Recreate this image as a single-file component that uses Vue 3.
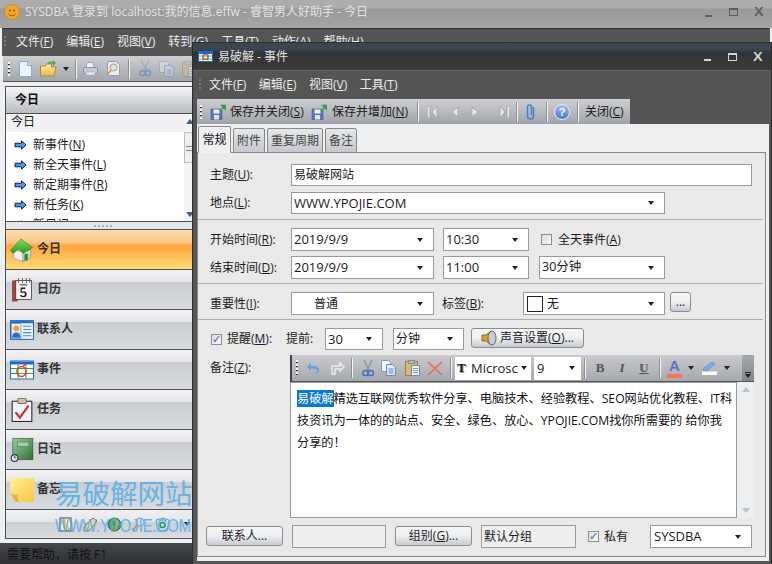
<script setup>
import { h } from 'vue'

const Mn = (props) => {
  const m = props.t.match(/^(.*\()(.)(\).*)$/)
  return m ? [m[1], h('u', m[2]), m[3]] : props.t
}
Mn.props = ['t']

const mainMenu = ['文件(F)', '编辑(E)', '视图(V)', '转到(G)', '工具(T)', '动作(A)', '帮助(H)']
const eventMenu = ['文件(F)', '编辑(E)', '视图(V)', '工具(T)']
const quick = ['新事件(N)', '新全天事件(L)', '新定期事件(R)', '新任务(K)', '新日记']
const nav = [
  { label: '今日', icon: 'i-home', active: true },
  { label: '日历', icon: 'i-cal' },
  { label: '联系人', icon: 'i-contact' },
  { label: '事件', icon: 'i-event' },
  { label: '任务', icon: 'i-task' },
  { label: '日记', icon: 'i-journal' },
  { label: '备忘', icon: 'i-note' }
]
const tabs = ['常规', '附件', '重复周期', '备注']
</script>

<template>
  <div class="desktop">
    <svg class="defs" width="0" height="0" aria-hidden="true">
      <defs>
        <linearGradient id="gGreen" x1="0" y1="0" x2="0" y2="1"><stop offset="0" stop-color="#8fe05a"/><stop offset="1" stop-color="#1f9a2a"/></linearGradient>
        <linearGradient id="gNote" x1="0" y1="0" x2="1" y2="1"><stop offset="0" stop-color="#fff09a"/><stop offset="1" stop-color="#f8c63e"/></linearGradient>
        <linearGradient id="gBook" x1="0" y1="0" x2="1" y2="1"><stop offset="0" stop-color="#9dcf9a"/><stop offset="1" stop-color="#2f6e3c"/></linearGradient>
        <linearGradient id="gHelp" x1="0" y1="0" x2="0" y2="1"><stop offset="0" stop-color="#a8c4f0"/><stop offset="1" stop-color="#3f74cc"/></linearGradient>
        <linearGradient id="gFolder" x1="0" y1="0" x2="0" y2="1"><stop offset="0" stop-color="#fff0a8"/><stop offset="1" stop-color="#e8b84c"/></linearGradient>
      </defs>
      <symbol id="i-arrow" viewBox="0 0 13 10"><path d="M1 3.2h6.5V.8L12 5 7.500 9.200V6.800H1z" fill="#3f9cf5" stroke="#12243f"/></symbol>
      <symbol id="i-home" viewBox="0 0 24 25">
        <path d="M3 12v9l10 3.500V15z" fill="#f4f2ea" stroke="#777" stroke-width=".5"/>
        <path d="M13 15v9.500l8-4V12z" fill="#d8d6cc" stroke="#777" stroke-width=".5"/>
        <path d="M0 13 11 1l12 9-10 6-4-5-6 5z" fill="url(#gGreen)" stroke="#1c7a26" stroke-width=".6"/>
        <rect x="14.500" y="16.500" width="3.500" height="7" fill="#1e8f35"/>
      </symbol>
      <symbol id="i-cal" viewBox="0 0 21 25">
        <rect x="0.500" y="3" width="5" height="21" fill="#c03a30" stroke="#444" stroke-width=".6"/>
        <rect x="4" y="2.500" width="16.500" height="20" fill="#f4f4f4" stroke="#333" stroke-width=".8"/>
        <path d="M7 0v5M11 0v5M15 0v5M18.500 0v5" stroke="#555"/>
        <rect x="8" y="6" width="8" height="2" fill="#888"/>
        <path d="M9 10h5v1.500H10.300v2.500H13c2 0 2.300 1 2.300 3s-1 3-3.300 3-3.200-.8-3.300-2.300h1.500c.2.700.8 1 1.700 1 1 0 1.600-.5 1.600-1.700s-.5-1.600-1.600-1.600H9z" fill="#222"/>
      </symbol>
      <symbol id="i-contact" viewBox="0 0 23 19">
        <rect x="0.500" y="0.500" width="22" height="18" fill="#eef4ff" stroke="#1a6cc8"/>
        <rect x="1" y="1" width="21" height="2" fill="#1a6cc8"/>
        <rect x="1.500" y="3.500" width="9" height="14" fill="#f8f0d0" stroke="#1a6cc8" stroke-width=".5"/>
        <circle cx="6" cy="8" r="2.800" fill="#e8a050"/>
        <path d="M2 17c0-4 2-5 4-5s4 1 4 5z" fill="#2a70c8"/>
        <path d="M12.500 6h8M12.500 9h8M12.500 12h8M12.500 15h8" stroke="#4a90d8"/>
      </symbol>
      <symbol id="i-event" viewBox="0 0 24 19">
        <rect x="0.500" y="0.500" width="23" height="18" fill="#fff" stroke="#1a6cc8"/>
        <rect x="1" y="1" width="22" height="3" fill="#1a6cc8"/>
        <path d="M1 8h22M1 13h22M8 4v14M16 4v14" stroke="#3a9a4a"/>
        <ellipse cx="11.500" cy="11" rx="4.500" ry="5" fill="none" stroke="#e83a20" stroke-width="1.600"/>
        <path d="M13 6l3-3" stroke="#e83a20" stroke-width="1.400"/>
      </symbol>
      <symbol id="i-task" viewBox="0 0 20 22">
        <rect x="1" y="3" width="18" height="18.500" fill="#f3f6ff" stroke="#2a2a3a"/>
        <rect x="6" y="0.500" width="8" height="4.500" rx="1.500" fill="#d8c090" stroke="#776"/>
        <path d="M4 13l4 5 8-11" fill="none" stroke="#d82a2a" stroke-width="2"/>
      </symbol>
      <symbol id="i-journal" viewBox="0 0 20 21">
        <rect x="2" y="0.500" width="17.500" height="18.500" fill="url(#gBook)" stroke="#2f5a3a" stroke-width=".6"/>
        <rect x="6" y="3.500" width="10" height="4" fill="#a8cfa8" stroke="#4f7a58" stroke-width=".6"/>
        <circle cx="3.500" cy="17.500" r="3" fill="#e0e4ee" stroke="#334"/>
        <path d="M3.500 15.500v2h1.500" stroke="#334" fill="none" stroke-width=".7"/>
      </symbol>
      <symbol id="i-note" viewBox="0 0 21 21">
        <path d="M0 0h21v21H6L0 14z" fill="url(#gNote)"/>
        <path d="M0 13c3 2 5 2 7 1-1 2 0 5 1 7H5z" fill="#d8a030" opacity=".7"/>
      </symbol>
      <symbol id="i-save" viewBox="0 0 16 16">
        <path d="M1 5h10l1 1v9.500H1z" fill="#5c76b8" stroke="#44598f" stroke-width=".6"/>
        <rect x="3.500" y="5.500" width="6" height="4" fill="#eef0f8"/>
        <rect x="4" y="11" width="5" height="4.500" fill="#dfe3ee"/>
        <path d="M10 7l4-4M11.500 1.500h4v4z" stroke="#3f9a4a" fill="#3f9a4a" stroke-width="1.300"/>
      </symbol>
      <symbol id="i-scissor" viewBox="0 0 14 17">
        <path d="M3 0l5 10M11 0L6 10" stroke="#8a9099" stroke-width="1.400"/>
        <circle cx="4.500" cy="13" r="2.600" fill="none" stroke="#3f6fc0" stroke-width="1.500"/>
        <circle cx="9.800" cy="13" r="2.600" fill="none" stroke="#3f6fc0" stroke-width="1.500"/>
      </symbol>
      <symbol id="i-copy" viewBox="0 0 15 16">
        <path d="M.5.500h7l2 2v9h-9z" fill="#f4f8ff" stroke="#7a9ac8"/>
        <path d="M5.500 4.500h6l3 3v8h-9z" fill="#dfeafb" stroke="#6a8abc"/>
        <path d="M7.500 9h5M7.500 11h5M7.500 13h5" stroke="#6a8abc"/>
      </symbol>
      <symbol id="i-paste" viewBox="0 0 15 16">
        <rect x=".5" y="1.500" width="12" height="14" fill="#dcb870" stroke="#a08040"/>
        <rect x="3.500" y=".5" width="6" height="3" fill="#bbb" stroke="#888"/>
        <path d="M6.500 5.500h8v10h-8z" fill="#eef4ff" stroke="#6a8abc"/>
        <path d="M8 8.500h5M8 10.500h5M8 12.500h5" stroke="#7a9ac8"/>
      </symbol>
      <symbol id="i-first" viewBox="0 0 12 14"><path d="M1 1h2v12H1M10 1l-5 6 5 6z" fill="#e8e9ea" stroke="#a5a8ad"/></symbol>
      <symbol id="i-last" viewBox="0 0 12 14"><path d="M11 1H9v12h2M2 1l5 6-5 6z" fill="#e8e9ea" stroke="#a5a8ad"/></symbol>
    </svg>

    <!-- main window -->
    <section class="main">
      <header class="m-title">
        <svg class="sun" viewBox="0 0 16 16">
          <circle cx="8" cy="8" r="7.500" fill="#f5a623" stroke="#c77d10" stroke-width=".6"/>
          <circle cx="6" cy="6.500" r="1" fill="#8a5a10"/><circle cx="10" cy="6.500" r="1" fill="#8a5a10"/>
          <path d="M4.500 9.500c1 3 6 3 7 0" fill="none" stroke="#8a5a10"/>
        </svg>
        <span class="m-title-text">SYSDBA 登录到 localhost:我的信息.effw - 睿智男人好助手 - 今日</span>
        <span class="ctrls ctrls-m">
          <i class="c-min"></i><i class="c-max"></i><i class="c-x">X</i>
        </span>
      </header>
      <nav class="m-menu">
        <span class="grip grip-v"></span>
        <span v-for="m in mainMenu" :key="m" class="m-item"><Mn :t="m" /></span>
      </nav>
      <div class="m-tool">
        <span class="grip grip-w"></span>
        <svg class="ic-new" viewBox="0 0 13 16"><path d="M.5.500h8l4 4v11H.5z" fill="#eef4ff" stroke="#8aa8d0"/><path d="M8.500.500v4h4" fill="#cfe0f8" stroke="#8aa8d0"/></svg>
        <svg class="ic-open" viewBox="0 0 17 17"><path d="M.5 6h5l1-2h5v3H16l-2 9H.5z" fill="url(#gFolder)" stroke="#a88a40"/><path d="M7 4c1-3 4-3 6-2V0l3 3-3 3V4c-2-1-4 0-6 0z" fill="#49a84a"/></svg>
        <i class="caret caret-open"></i>
        <i class="sep sep-m1"></i>
        <svg class="ic-print" viewBox="0 0 15 14"><path d="M4 .5h6l1 5H3z" fill="#eef3fa" stroke="#9aa8b8"/><rect x=".5" y="5.500" width="14" height="6" rx="1" fill="#c4cad2" stroke="#8a929a"/><rect x="3" y="10" width="9" height="3" fill="#eee" stroke="#999" stroke-width=".5"/></svg>
        <svg class="ic-prev" viewBox="0 0 13 15"><path d="M.5.500h8l4 3v11H.5z" fill="#e6eef8" stroke="#8aa0c0"/><circle cx="6.500" cy="6.500" r="3.500" fill="#cfe6ff" stroke="#e09030"/><path d="M4 9l-3 4" stroke="#e09030" stroke-width="1.600"/></svg>
        <i class="sep sep-m2"></i>
        <svg class="ic-mcut" viewBox="0 0 14 17"><use href="#i-scissor" opacity=".45"/></svg>
        <svg class="ic-mcopy" viewBox="0 0 15 16"><use href="#i-copy" opacity=".4"/></svg>
        <svg class="ic-mpaste" viewBox="0 0 15 16"><use href="#i-paste" opacity=".4"/></svg>
      </div>

      <div class="m-body">
        <aside class="sidebar">
          <div class="side-head">今日</div>
          <div class="side-top">
            <div class="side-list">
              <div class="side-sub">今日</div>
              <div v-for="q in quick" :key="q" class="q-row">
                <svg class="q-arrow"><use href="#i-arrow"/></svg>
                <span><Mn :t="q" /></span>
              </div>
            </div>
            <div class="side-scroll">
              <i class="s-up"></i>
              <i class="s-thumb"></i>
              <i class="s-down"></i>
            </div>
          </div>
          <div class="splitter"><i></i><i></i><i></i><i></i><i></i></div>
          <div v-for="n in nav" :key="n.label" class="nav-row" :class="{ active: n.active }">
            <span class="nav-ic"><svg class="nav-svg" :class="n.icon"><use :href="'#' + n.icon"/></svg></span>
            <span class="nav-label">{{ n.label }}</span>
          </div>
          <div class="nav-foot">
            <svg class="f-ic f1" viewBox="0 0 15 15"><rect x="1" y="1" width="11" height="13" fill="#eef4ff" stroke="#445"/><path d="M5 1v10l3 3 3-3" fill="#f8d870" stroke="#a88a40"/></svg>
            <svg class="f-ic f2" viewBox="0 0 15 15"><path d="M10 1l4 3-8 10-5 0 0-4z" fill="#f0d890" stroke="#8a7040"/></svg>
            <svg class="f-ic f3" viewBox="0 0 15 15"><circle cx="7.500" cy="7.500" r="6.500" fill="#4aa050" stroke="#2a6a7a"/><path d="M7 1c3 2 4 7 1 12" stroke="#e89030" fill="none" stroke-width="2"/></svg>
            <svg class="f-ic f4" viewBox="0 0 15 15"><circle cx="9" cy="5" r="4" fill="#cfe6ff" stroke="#7a9ac8"/><path d="M6 8l-4 5" stroke="#e08030" stroke-width="2"/></svg>
            <svg class="f-ic f5" viewBox="0 0 15 15"><path d="M1 3l7-2 6 2-2 11H3z" fill="#bfe0f8" stroke="#6a9ac0"/><circle cx="7.500" cy="8" r="2.500" fill="none" stroke="#2a9a3a" stroke-width="1.500"/></svg>
            <i class="caret caret-foot"></i>
          </div>
        </aside>
      </div>
      <footer class="m-status">需要帮助，请按 F1</footer>
      <div class="wm">
        <div class="wm-cn">易破解网站</div>
        <div class="wm-en">WWW.YPOJIE.COM</div>
      </div>
    </section>

    <!-- event window -->
    <section class="event">
      <header class="e-title">
        <svg class="e-ic" viewBox="0 0 15 11">
          <rect x=".5" y=".5" width="14" height="10" fill="#fff" stroke="#1a6cc8"/>
          <rect x="1" y="1" width="13" height="2" fill="#1a6cc8"/>
          <path d="M1 5h13M1 8h13M5 3v7M10 3v7" stroke="#3a9a4a" stroke-width=".8"/>
          <circle cx="7.500" cy="6" r="2.500" fill="none" stroke="#e83a20" stroke-width="1.200"/>
        </svg>
        <span class="e-title-text">易破解 - 事件</span>
        <span class="ctrls ctrls-e">
          <i class="c-min"></i><i class="c-max"></i><i class="c-x">X</i>
        </span>
      </header>
      <nav class="e-menu">
        <span class="grip grip-e"></span>
        <span v-for="m in eventMenu" :key="m" class="e-item"><Mn :t="m" /></span>
      </nav>
      <div class="e-tool">
        <span class="grip grip-w"></span>
        <svg class="ic-save1"><use href="#i-save"/></svg>
        <span class="t-save1"><Mn t="保存并关闭(S)" /></span>
        <svg class="ic-save2"><use href="#i-save"/></svg>
        <span class="t-save2"><Mn t="保存并增加(N)" /></span>
        <i class="sep sep-e1"></i>
        <svg class="ic-n1"><use href="#i-first"/></svg>
        <svg class="ic-n2" viewBox="0 0 8 12"><path d="M7 1L1 6l6 5z" fill="#e8e9ea" stroke="#a5a8ad"/></svg>
        <svg class="ic-n3" viewBox="0 0 8 12"><path d="M1 1l6 5-6 5z" fill="#e8e9ea" stroke="#a5a8ad"/></svg>
        <svg class="ic-n4"><use href="#i-last"/></svg>
        <i class="sep sep-e2"></i>
        <svg class="ic-clip" viewBox="0 0 11 17"><path d="M8.500 4v9a3 3 0 0 1-6 0V4a2 2 0 0 1 4 0v8" fill="none" stroke="#3f80d8" stroke-width="1.500"/></svg>
        <i class="sep sep-e3"></i>
        <svg class="ic-help" viewBox="0 0 16 16"><circle cx="8" cy="8" r="7.500" fill="url(#gHelp)" stroke="#e8eef8"/><text x="8" y="12" text-anchor="middle" class="help-q">?</text></svg>
        <i class="sep sep-e4"></i>
        <span class="t-close"><Mn t="关闭(C)" /></span>
      </div>

      <div class="e-content">
        <div class="tabs">
          <span v-for="(t, i) in tabs" :key="t" class="tab" :class="{ on: i === 0 }">{{ t }}</span>
        </div>
        <div class="panel">
          <div class="row r-subject">
            <label class="lbl"><Mn t="主题(U):" /></label>
            <div class="fld w-subject">易破解网站</div>
          </div>
          <div class="row r-place">
            <label class="lbl"><Mn t="地点(L):" /></label>
            <div class="fld w-place latin">WWW.YPOJIE.COM<i class="caret"></i></div>
          </div>
          <hr class="hr hr-1" />
          <div class="row r-start">
            <label class="lbl"><Mn t="开始时间(R):" /></label>
            <div class="fld w-date latin">2019/9/9<i class="caret"></i></div>
            <div class="fld w-time latin">10:30<i class="caret"></i></div>
            <span class="chk chk-off"></span>
            <span class="chk-text"><Mn t="全天事件(A)" /></span>
          </div>
          <div class="row r-end">
            <label class="lbl"><Mn t="结束时间(D):" /></label>
            <div class="fld w-date latin">2019/9/9<i class="caret"></i></div>
            <div class="fld w-time latin">11:00<i class="caret"></i></div>
            <div class="fld w-dur">30分钟<i class="caret"></i></div>
          </div>
          <hr class="hr hr-2" />
          <div class="row r-imp">
            <label class="lbl"><Mn t="重要性(I):" /></label>
            <div class="fld w-date imp">普通<i class="caret"></i></div>
            <label class="lbl-tag"><Mn t="标签(B):" /></label>
            <div class="fld w-tag"><i class="swatch"></i>无<i class="caret"></i></div>
            <button class="btn btn-dots">...</button>
          </div>
          <hr class="hr hr-3" />
          <div class="row r-remind">
            <span class="chk chk-on"></span>
            <span class="remind-text"><Mn t="提醒(M):" /></span>
            <span class="before">提前:</span>
            <div class="fld w-num latin">30<i class="caret"></i></div>
            <div class="fld w-unit">分钟<i class="caret"></i></div>
            <button class="btn btn-sound">
              <svg class="ic-sound" viewBox="0 0 16 16"><path d="M1 5h4l5-4v14l-5-4H1z" fill="#d8a030" stroke="#8a6a20"/><ellipse cx="11" cy="8" rx="4" ry="7" fill="#c8ccd4" stroke="#666"/></svg>
              <span><Mn t="声音设置(O)..." /></span>
            </button>
          </div>
          <div class="r-notes">
            <label class="lbl lbl-notes"><Mn t="备注(Z):" /></label>
            <div class="notes">
              <div class="n-tool">
                <span class="grip grip-n"></span>
                <svg class="ic-undo" viewBox="0 0 14 13"><path d="M5 1L1 5l4 4V6.500h3c2 0 3 1 3 2.500S10 11.500 8 12c4 0 5-2 5-4s-2-4-5-4H5z" fill="#6f9ce0"/></svg>
                <svg class="ic-redo" viewBox="0 0 15 13"><path d="M10 1l4 4-4 4V7H5v5H2V4h8z" fill="none" stroke="#eee" stroke-width="1.400"/></svg>
                <i class="sep sep-n1"></i>
                <svg class="ic-cut"><use href="#i-scissor"/></svg>
                <svg class="ic-copy"><use href="#i-copy"/></svg>
                <svg class="ic-paste"><use href="#i-paste"/></svg>
                <svg class="ic-del" viewBox="0 0 16 15"><path d="M1 1l14 13M15 1L1 14" stroke="#ec6a50" stroke-width="1.700"/></svg>
                <i class="sep sep-n2"></i>
                <div class="n-font">
                  <b class="tt">T</b><span>Microsc</span><i class="caret"></i>
                </div>
                <div class="n-size">9<i class="caret"></i></div>
                <i class="sep sep-n3"></i>
                <b class="fmt fmt-b">B</b>
                <i class="fmt fmt-i">I</i>
                <u class="fmt fmt-u">U</u>
                <i class="sep sep-n4"></i>
                <span class="fcolor">A</span>
                <i class="caret caret-a"></i>
                <svg class="ic-hl" viewBox="0 0 16 14"><path d="M2 8l9-7 3 2-8 7H3z" fill="#7aa8e8" stroke="#4a78c8" stroke-width=".5"/><rect x="1" y="10.500" width="15" height="3.500" fill="#fff"/></svg>
                <i class="caret caret-hl"></i>
                <span class="n-more"><i class="more-line"></i><i class="caret"></i></span>
              </div>
              <div class="n-edit">
                <div class="n-text"><span class="sel">易破解</span>精选互联网优秀软件分享、电脑技术、经验教程、SEO网站优化教程、IT科<br />技资讯为一体的的站点、安全、绿色、放心、YPOJIE.COM找你所需要的 给你我<br />分享的！</div>
                <div class="n-scroll"><i class="up"></i><i class="down"></i></div>
              </div>
            </div>
          </div>
          <div class="row r-bottom">
            <button class="btn btn-contact">联系人...</button>
            <div class="fld ro w-ro1"></div>
            <button class="btn btn-group"><span><Mn t="组别(G)..." /></span></button>
            <div class="fld ro w-ro2">默认分组</div>
            <span class="chk chk-on chk-priv"></span>
            <span class="priv-text">私有</span>
            <div class="fld w-owner latin">SYSDBA<i class="caret"></i></div>
          </div>
        </div>
      </div>
    </section>
  </div>
</template>

<style>
html, body { margin: 0; padding: 0; background: #555; }
</style>

<style scoped>
.desktop {
  position: relative;
  width: 772px;
  height: 564px;
  overflow: hidden;
  font-family: "Open Sans", "Noto Sans CJK SC", sans-serif;
  font-size: 12px;
  color: #1a1a1a;
  line-height: 1;
}
.desktop i { font-style: normal; display: block; flex: none; }
.desktop svg { display: block; flex: none; }
.defs { position: absolute; }
.latin { font-size: 13px; }

/* shared */
.grip { display: block; flex: none; width: 2px; background: repeating-linear-gradient(#eee 0 2px, transparent 2px 4px); }
.grip-v, .grip-e { height: 12px; background: repeating-linear-gradient(#777 0 2px, transparent 2px 4px); }
.grip-w { height: 14px; margin-left: 5px; background: repeating-linear-gradient(#fff 0 2px, #333 2px 3px, transparent 3px 4px); }
.sep { width: 1px; height: 20px; background: #f2f3f4; box-shadow: -1px 0 0 #8c9096; }
.caret { width: 0; height: 0; border: 3.500px solid transparent; border-top: 4px solid #222; border-bottom: 0; }
.ctrls { margin-left: auto; display: flex; align-items: center; }
.c-min { width: 7px; height: 2px; background: currentColor; margin-top: 7px; }
.c-max { box-sizing: border-box; width: 9px; height: 8px; border: 1px solid currentColor; border-top-width: 2px; margin-left: 17px; }
.c-x { font: 700 12px "Liberation Sans", sans-serif; margin-left: 16px; width: 9px; transform: scaleX(1.200); transform-origin: left; }

/* main window */
.main { position: absolute; inset: 0; display: flex; flex-direction: column; background: #eeeff1; }
.m-title { flex: none; height: 28px; box-sizing: border-box; display: flex; align-items: center; padding: 0 9px 4px 4px; background: linear-gradient(#abacae 0, #abacae 8px, #9a9a9b 9px, #a2a2a3 24px, #a8a8aa 28px); color: #555; }
.sun { width: 16px; height: 16px; }
.m-title-text { color: #e4e4e4; margin-left: 5px; }
.ctrls-m { color: #5e5e5e; }
.m-menu { flex: none; height: 28px; margin-left: 2px; margin-right: 2px; display: flex; align-items: center; padding-bottom: 1px; box-sizing: border-box; background: #555; color: #ececec; border-top: 1px solid #333; }
.grip-v { margin-left: 2px; margin-right: 10px; }
.m-item { margin-right: 13px; flex: none; }
.m-tool { flex: none; height: 25px; margin-left: 3px; display: flex; align-items: center; background: linear-gradient(#cdcfd2, #a2a5ab); border-bottom: 1px solid #555; }
.ic-new { width: 13px; height: 16px; margin-left: 9px; }
.ic-open { width: 17px; height: 17px; margin-left: 8px; }
.caret-open { margin-left: 6px; }
.sep-m1 { margin-left: 7px; }
.ic-print { width: 15px; height: 14px; margin-left: 6px; }
.ic-prev { width: 13px; height: 15px; margin-left: 9px; }
.sep-m2 { margin-left: 9px; }
.ic-mcut { width: 14px; height: 17px; margin-left: 8px; }
.ic-mcopy { width: 15px; height: 16px; margin-left: 7px; }
.ic-mpaste { width: 15px; height: 16px; margin-left: 8px; }

.m-body { flex: 1; min-height: 0; padding: 4px 0 4px 5px; }
.sidebar { width: 200px; height: 100%; box-sizing: border-box; border: 1px solid #4c5159; display: flex; flex-direction: column; background: #fff; overflow: hidden; }
.side-head { flex: none; height: 27px; line-height: 26px; padding-left: 9px; font-weight: 700; color: #111; background: linear-gradient(#f6f6f7, #b8bbc0); border-bottom: 1px solid #4c5159; box-sizing: border-box; }
.side-top { flex: none; height: 107px; display: flex; overflow: hidden; }
.side-list { flex: none; width: 178px; }
.side-sub { height: 18px; line-height: 16px; padding-left: 5px; margin-bottom: 3px; background: #f0f0f2; }
.q-row { height: 20px; display: flex; align-items: center; padding-left: 8px; }
.q-arrow { width: 13px; height: 10px; }
.q-row span { margin-left: 6px; }
.side-scroll { flex: none; width: 14px; background: #f3f4f6; display: flex; flex-direction: column; }
.s-up, .s-down { width: 0; height: 0; border: 4px solid transparent; margin-left: 2px; }
.s-up { border-top: 0; border-bottom: 5px solid #4a5a88; margin-top: 5px; }
.s-thumb { box-sizing: border-box; width: 10px; height: 31px; margin-top: 8px; border: 1px solid #bbb; background: repeating-linear-gradient(#e8e8e8 0 3px, #888 3px 4px) center / 6px 10px no-repeat #eee; }
.s-down { border-bottom: 0; border-top: 5px solid #4a5a88; margin-top: 49px; }
.splitter { flex: none; height: 8px; box-sizing: border-box; border-top: 1px solid #4c5159; background: #e5e6e8; display: flex; justify-content: center; align-items: center; gap: 2px; padding-right: 4px; }
.splitter i { width: 2px; height: 2px; background: #b0b0b0; }
.nav-row { flex: none; height: 40px; box-sizing: border-box; border-top: 1px solid #4c5159; display: flex; align-items: center; background: linear-gradient(#f3f3f4 0, #e4e5e7 12px, #c9ccd1 12px, #dadcdf 100%); }
.nav-row.active { background: linear-gradient(#fddcb0 0, #fdc88a 12px, #ffa63a 16px, #ffdc78 100%); }
.nav-ic { width: 31px; display: flex; justify-content: center; flex: none; }
.nav-svg { width: 24px; height: 24px; }
.nav-label { font-weight: 700; color: #333; margin-top: -2px; }
.nav-foot { flex: 1; box-sizing: border-box; border-top: 1px solid #4c5159; display: flex; align-items: center; background: linear-gradient(#f0f0f2 0, #e5e6e8 12px, #cbced3 12px, #dadcdf 100%); }
.f-ic { width: 15px; height: 15px; }
.f1 { margin-left: 53px; }
.f2 { margin-left: 9px; }
.f3, .f4, .f5 { margin-left: 9px; }
.caret-foot { margin-left: 14px; }
.m-status { flex: none; height: 21px; line-height: 24px; padding-left: 7px; color: #111; background: linear-gradient(#44474e, #2f3033); }
.wm { position: absolute; left: 55px; top: 478px; color: #5bb0ea; opacity: .9; pointer-events: none; white-space: nowrap; }
.wm-cn { font-size: 27.500px; line-height: 31px; }
.wm-en { font: 18px/20px "Liberation Sans", sans-serif; margin-top: 7px; transform: scaleX(.82); transform-origin: left; }

/* event window */
.event { position: absolute; left: 192px; top: 42px; width: 580px; height: 522px; box-sizing: border-box; border: 1px solid #2b2d31; border-bottom: 0; display: flex; flex-direction: column; background: #555; }
.e-title { flex: none; height: 28px; box-sizing: border-box; display: flex; align-items: center; padding: 0 9px 0 5px; background: linear-gradient(#3e4654 0, #3c4452 7px, #333436 9px, #3a3a3a 27px, #555 28px); color: #d0d0d0; border-bottom: 1px solid #666; }
.e-ic { width: 15px; height: 11px; }
.e-title-text { margin-left: 5px; color: #e2e2e2; }
.ctrls-e { color: #d4d4d4; }
.e-menu { flex: none; height: 28px; display: flex; align-items: center; color: #ececec; }
.grip-e { margin-left: 6px; margin-right: 8px; }
.e-item { margin-right: 12.500px; flex: none; }
.e-tool { flex: none; width: 433px; height: 25px; margin-left: 4px; display: flex; align-items: center; background: linear-gradient(#cdcfd2, #a0a3a9); }
.e-tool .grip-w { margin-left: 3px; }
.ic-save1, .ic-save2 { width: 16px; height: 16px; }
.ic-save1 { margin-left: 8px; }
.t-save1 { margin-left: 4px; width: 76px; flex: none; white-space: nowrap; }
.ic-save2 { margin-left: 5px; }
.t-save2 { margin-left: 5px; width: 78px; flex: none; white-space: nowrap; }
.sep-e1 { margin-left: 8px; }
.ic-n1, .ic-n4 { width: 12px; height: 14px; }
.ic-n1 { margin-left: 8px; }
.ic-n2, .ic-n3 { width: 8px; height: 12px; margin-left: 12px; }
.ic-n4 { margin-left: 19px; }
.sep-e2 { margin-left: 7px; }
.ic-clip { width: 11px; height: 17px; margin-left: 7px; }
.sep-e3 { margin-left: 11px; }
.ic-help { width: 16px; height: 16px; margin-left: 6px; }
.help-q { font: 700 11px "Liberation Sans", sans-serif; fill: #fff; }
.sep-e4 { margin-left: 8px; }
.t-close { margin-left: 6px; white-space: nowrap; }

.e-content { flex: 1; min-height: 0; margin: 0 2px 3px 4px; padding-top: 2px; background: #eeeff1; display: flex; flex-direction: column; }
.tabs { flex: none; height: 27px; display: flex; align-items: flex-end; gap: 2px; padding-left: 1px; position: relative; z-index: 1; margin-bottom: -1px; }
.tab { height: 25px; box-sizing: border-box; border: 1px solid #888; padding: 0 3px; line-height: 23px; background: linear-gradient(#e6e7ea, #c5c8cd); color: #444; border-radius: 2px 2px 0 0; }
.tab.on { height: 27px; padding: 0 3.500px; line-height: 25px; background: #eeeff1; color: #111; border-bottom-color: #eeeff1; }
.panel { flex: 1; min-height: 0; margin-right: 3px; box-sizing: border-box; border: 1px solid #888; background: #e9e9e9; padding-top: 11px; display: flex; flex-direction: column; margin-bottom: 4px; }

.row { flex: none; display: flex; align-items: center; padding-left: 12px; }
.lbl { flex: none; width: 81px; white-space: nowrap; }
.fld { box-sizing: border-box; flex: none; height: 100%; border: 1px solid #999; background: #fff; display: flex; align-items: center; padding: 0 2px; white-space: nowrap; }
.fld .caret { margin-left: auto; margin-right: 8px; }
.hr { flex: none; height: 1px; border: 0; background: #adadad; margin: 0 2px 0 0; }
.r-subject { height: 22px; }
.r-place { height: 22px; margin-top: 6px; }
.hr-1 { margin-top: 5px; }
.r-start { height: 23px; margin-top: 8px; }
.r-end { height: 23px; margin-top: 5px; }
.hr-2 { margin-top: 4px; }
.r-imp { height: 23px; margin-top: 8px; }
.hr-3 { margin-top: 4px; }
.r-remind { height: 22px; margin-top: 8px; }
.w-subject { width: 461px; }
.w-place { width: 374px; }
.w-date { width: 143px; }
.w-time { width: 86px; margin-left: 9px; }
.chk { flex: none; box-sizing: border-box; width: 11px; height: 11px; border: 1px solid #8d8d8d; background: linear-gradient(135deg, #dcdcdc, #f7f7f7); position: relative; }
.chk-off { margin-left: 12px; }
.chk-on::after { content: "✓"; position: absolute; left: 0; top: -1px; font: 700 11px/11px "DejaVu Sans", sans-serif; color: #3f5fa8; }
.chk-text { margin-left: 6px; }
.w-dur { width: 126px; margin-left: 10px; font-size: 12.500px; }
.imp { padding-left: 22px; }
.lbl-tag { margin-left: 8px; width: 81px; white-space: nowrap; }
.w-tag { width: 142px; }
.swatch { width: 14px; height: 14px; border: 1px solid #222; background: #fff; margin: 0 4px 0 1px; }
.btn { flex: none; box-sizing: border-box; border: 1px solid #8c8c8c; border-radius: 3px; background: linear-gradient(#f4f5f6, #f0f1f3 45%, #c6cbd2); font: inherit; color: #1a1a1a; padding: 0; display: flex; align-items: center; justify-content: center; white-space: nowrap; }
.btn-dots { width: 21px; height: 20px; margin-left: 5px; margin-top: -3px; }
.r-remind > .chk-on { margin-left: 1px; }
.remind-text { margin-left: 5px; width: 59px; flex: none; white-space: nowrap; }
.before { width: 39px; flex: none; }
.w-num { width: 58px; }
.w-unit { width: 71px; margin-left: 10px; }
.btn-sound { width: 113px; height: 20px; margin-left: 7px; margin-top: -2px; gap: 3px; }
.ic-sound { width: 16px; height: 16px; }
.r-notes { flex: none; height: 163px; margin-top: 5px; padding-left: 12px; display: flex; }
.lbl-notes { padding-top: 7px; width: 80px; }
.notes { flex: none; width: 464px; display: flex; flex-direction: column; }
.n-tool { flex: none; height: 27px; box-sizing: border-box; display: flex; align-items: center; background: linear-gradient(#c9cbce, #a5a8ae); border-left: 2px solid #444; border-bottom: 1px solid #555; }
.grip-n { height: 16px; margin-left: 4px; background: repeating-linear-gradient(#fff 0 2px, #333 2px 3px, transparent 3px 4px); }
.ic-undo { width: 14px; height: 13px; margin-left: 8px; }
.ic-redo { width: 15px; height: 13px; margin-left: 10px; }
.sep-n1 { margin-left: 7px; }
.ic-cut { width: 14px; height: 17px; margin-left: 8px; }
.ic-copy { width: 15px; height: 16px; margin-left: 6px; }
.ic-paste { width: 15px; height: 16px; margin-left: 9px; }
.ic-del { width: 16px; height: 15px; margin-left: 7px; }
.sep-n2 { margin-left: 8px; }
.n-font, .n-size { box-sizing: border-box; flex: none; height: 23px; background: #fff; display: flex; align-items: center; font-size: 13px; }
.n-font { width: 76px; margin-left: 3px; padding-left: 2px; overflow: hidden; }
.tt { font: 700 13px "Liberation Serif", serif; width: 13px; text-shadow: 1px 1px 0 #888; margin-right: 1px; }
.n-font .caret { margin-left: auto; margin-right: 4px; }
.n-size { width: 47px; margin-left: 3px; padding-left: 3px; }
.n-size .caret { margin-left: auto; margin-right: 6px; }
.sep-n3 { margin-left: 4px; }
.fmt { font: 700 13px "Liberation Serif", serif; color: #555; flex: none; width: 12px; text-align: center; }
.fmt-b { margin-left: 8px; }
.desktop i.fmt-i { margin-left: 10px; font-style: italic; }
.fmt-u { margin-left: 10px; }
.sep-n4 { margin-left: 10px; }
.fcolor { margin-left: 6px; width: 15px; height: 19px; flex: none; box-sizing: border-box; border-bottom: 4px solid #f07850; font: 700 15px/14px "Liberation Sans", sans-serif; color: #5c74b8; text-align: center; }
.caret-a { margin-left: 6px; }
.ic-hl { width: 16px; height: 14px; margin-left: 7px; }
.caret-hl { margin-left: 7px; }
.n-more { margin-left: auto; width: 12px; align-self: stretch; background: linear-gradient(#a6a9ae, #82858c); display: flex; flex-direction: column; align-items: center; justify-content: flex-end; padding-bottom: 3px; gap: 1px; }
.more-line { width: 6px; height: 1px; background: #222; }
.n-edit { flex: 1; min-height: 0; display: flex; }
.n-text { flex: none; width: 447px; box-sizing: border-box; border: 1px solid #999; background: #fff; padding: 5px 6px; font-size: 12.200px; line-height: 22px; color: #111; white-space: nowrap; overflow: hidden; }
.sel { background: #0a78d7; color: #fff; }
.n-scroll { flex: none; width: 17px; background: #eeeff1; display: flex; flex-direction: column; align-items: center; justify-content: space-between; padding: 5px 0; box-sizing: border-box; }
.n-scroll .up { width: 0; height: 0; border: 4.500px solid transparent; border-top: 0; border-bottom: 5px solid #b6c2d8; }
.n-scroll .down { width: 0; height: 0; border: 4.500px solid transparent; border-bottom: 0; border-top: 5px solid #b6c2d8; }
.r-bottom { height: 23px; margin-top: 7px; padding-left: 8px; }
.btn-contact, .btn-group { width: 77px; height: 20px; margin-top: -1px; }
.ro { background: #eee; }
.w-ro1 { width: 94px; margin-left: 9px; }
.btn-group { margin-left: 9px; }
.w-ro2 { width: 95px; margin-left: 9px; }
.chk-priv { margin-left: 12px; }
.priv-text { margin-left: 5px; width: 46px; flex: none; }
.w-owner { width: 102px; padding-left: 3px; }
</style>
